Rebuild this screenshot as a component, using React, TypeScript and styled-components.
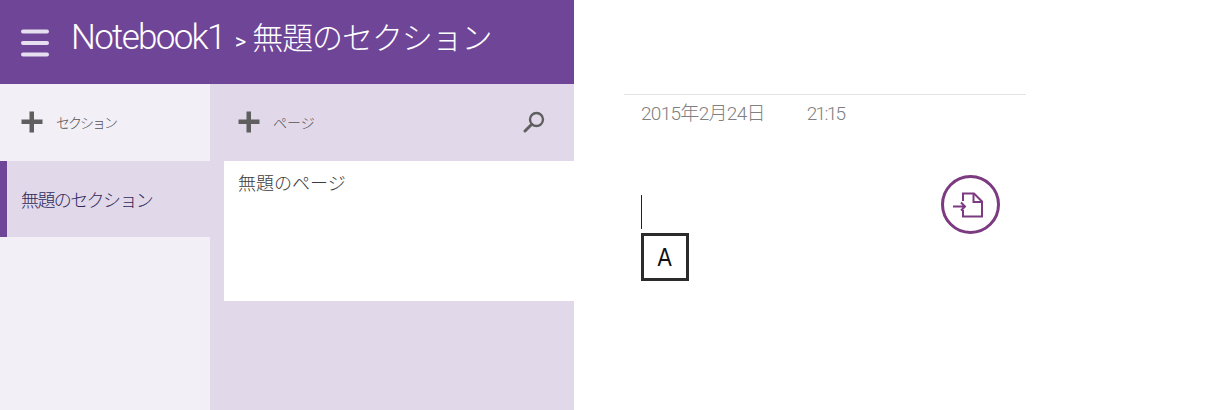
import styled, { createGlobalStyle } from 'styled-components'

const GlobalStyle = createGlobalStyle`
  html, body {
    margin: 0;
    padding: 0;
    background: #fff;
    overflow: hidden;
  }
  * {
    box-sizing: border-box;
  }
  body {
    font-family: "Open Sans", "Noto Sans CJK JP", sans-serif;
  }
`

const Page = styled.div`
  display: flex;
  width: 1230px;
  height: 410px;
`

const LeftPane = styled.div`
  display: flex;
  flex-direction: column;
  width: 574px;
  height: 100%;
`

const Header = styled.header`
  display: flex;
  align-items: center;
  gap: 22px;
  height: 84px;
  padding: 0 0 6px 21px;
  background: #6f4598;
`

const MenuGlyph = styled.svg`
  margin-top: 7px;
`

const Title = styled.h1`
  display: flex;
  align-items: baseline;
  margin: 0;
  font-family: Roboto, "Noto Sans CJK JP", sans-serif;
  font-size: 35px;
  font-weight: 300;
  line-height: 40px;
  color: #fff;
  white-space: nowrap;
`

const Crumb = styled.span`
  letter-spacing: -1.7px;
`

const Chevron = styled.span`
  margin: 0 6px 0 10px;
  font-size: 22px;
  font-weight: 400;
`

const CrumbJa = styled.span`
  font-family: "Noto Sans CJK JP", sans-serif;
  font-size: 31px;
  letter-spacing: -1.1px;
`

const Columns = styled.div`
  display: flex;
  flex: 1;
`

const SectionColumn = styled.nav`
  display: flex;
  flex-direction: column;
  width: 210px;
  background: #f2eff7;
`

const PageColumn = styled.div`
  display: flex;
  flex-direction: column;
  width: 364px;
  background: #e1d9ea;
`

const Toolbar = styled.div<{ $inset: number }>`
  display: flex;
  align-items: center;
  height: 77px;
  padding-left: ${(p) => p.$inset}px;
  padding-bottom: 1px;
`

const AddLabel = styled.span<{ $tracking: number }>`
  margin-left: 13px;
  font-family: "Noto Sans CJK JP", sans-serif;
  font-size: 14px;
  font-weight: 300;
  letter-spacing: ${(p) => p.$tracking}px;
  color: #555;
`

const SearchButton = styled.span`
  display: flex;
  margin-left: auto;
  margin-right: 29px;
`

const SectionItem = styled.div`
  display: flex;
  align-items: center;
  height: 76px;
  padding: 0 0 0 14px;
  border-left: 7px solid #6f4598;
  background: #e1d9ea;
  font-family: "Noto Sans CJK JP", sans-serif;
  font-size: 18px;
  font-weight: 300;
  letter-spacing: -1.6px;
  color: #2e2a5c;
`

const PageItem = styled.div`
  height: 140px;
  margin-left: 14px;
  padding: 8px 0 0 14px;
  background: #fff;
  font-family: "Noto Sans CJK JP", sans-serif;
  font-size: 18px;
  font-weight: 300;
  line-height: 26px;
  color: #3c3c3c;
`

const Editor = styled.main`
  position: relative;
  width: 402px;
  margin-left: 50px;
  padding-top: 94px;
`

const Rule = styled.div`
  height: 1px;
  background: #e3e3e3;
`

const Stamp = styled.div`
  display: flex;
  gap: 42px;
  height: 31px;
  padding: 7px 0 0 17px;
  font-family: Roboto, "Noto Sans CJK JP", sans-serif;
  font-size: 19px;
  font-weight: 300;
  line-height: 24px;
  color: #808080;
`

const StampPart = styled.span<{ $tracking: number }>`
  letter-spacing: ${(p) => p.$tracking}px;
`

const Caret = styled.div`
  width: 1px;
  height: 34px;
  margin: 69px 0 4px 17px;
  background: #222;
`

const KeyBox = styled.div`
  display: flex;
  align-items: center;
  justify-content: center;
  width: 48px;
  height: 48px;
  margin-left: 17px;
  border: 3px solid #2b2b2b;
  font-family: "Liberation Sans", sans-serif;
  font-size: 26px;
  color: #111;
`

const KeyLetter = styled.span`
  display: inline-block;
  transform: scaleX(0.82);
`

const SendButton = styled.div`
  position: absolute;
  left: 317px;
  top: 175px;
  display: flex;
  align-items: center;
  justify-content: center;
  width: 59px;
  height: 59px;
  padding-right: 5px;
  border: 3px solid #7c3a80;
  border-radius: 50%;
`

function PlusIcon() {
  return (
    <svg width="22" height="22" viewBox="0 0 22 22">
      <path d="M8.5 0.5h4.5v8h8.5v4.5h-8.5v8.5h-4.5v-8.5h-8v-4.5h8z" fill="#5f5f5f" />
    </svg>
  )
}

function HamburgerIcon() {
  return (
    <MenuGlyph width="28" height="28" viewBox="0 0 28 28">
      <g stroke="#e6dff0" strokeWidth="4" strokeLinecap="round">
        <line x1="2" y1="2.5" x2="26" y2="2.5" />
        <line x1="2" y1="14" x2="26" y2="14" />
        <line x1="2" y1="25.5" x2="26" y2="25.5" />
      </g>
    </MenuGlyph>
  )
}

function SearchIcon() {
  return (
    <svg width="22" height="22" viewBox="0 0 22 22">
      <circle cx="13.5" cy="8.5" r="6.5" fill="none" stroke="#5f5f5f" strokeWidth="2.4" />
      <line x1="8.5" y1="13.5" x2="2" y2="20" stroke="#5f5f5f" strokeWidth="3" strokeLinecap="round" />
    </svg>
  )
}

function SendIcon() {
  return (
    <svg width="30" height="26" viewBox="0 0 30 26" fill="none" stroke="#7c3a80" strokeWidth="2">
      <path d="M10 9V1.5H21L29 9.5V24.5H10V18" />
      <path d="M20.5 1.5V10H29" />
      <path d="M0 14.5H12M8 10.5l4 4-4 4" />
    </svg>
  )
}

export default function App() {
  return (
    <Page>
      <GlobalStyle />
      <LeftPane>
        <Header>
          <HamburgerIcon />
          <Title>
            <Crumb>Notebook1</Crumb>
            <Chevron>&gt;</Chevron>
            <CrumbJa>無題のセクション</CrumbJa>
          </Title>
        </Header>
        <Columns>
          <SectionColumn>
            <Toolbar $inset={21}>
              <PlusIcon />
              <AddLabel $tracking={-2}>セクション</AddLabel>
            </Toolbar>
            <SectionItem>無題のセクション</SectionItem>
          </SectionColumn>
          <PageColumn>
            <Toolbar $inset={28}>
              <PlusIcon />
              <AddLabel $tracking={0}>ページ</AddLabel>
              <SearchButton>
                <SearchIcon />
              </SearchButton>
            </Toolbar>
            <PageItem>無題のページ</PageItem>
          </PageColumn>
        </Columns>
      </LeftPane>
      <Editor>
        <Rule />
        <Stamp>
          <StampPart $tracking={-0.7}>2015年2月24日</StampPart>
          <StampPart $tracking={-1.7}>21:15</StampPart>
        </Stamp>
        <Caret />
        <KeyBox>
          <KeyLetter>A</KeyLetter>
        </KeyBox>
        <SendButton>
          <SendIcon />
        </SendButton>
      </Editor>
    </Page>
  )
}
